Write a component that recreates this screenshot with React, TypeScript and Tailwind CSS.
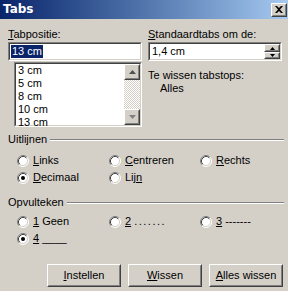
import type { ReactNode } from "react";

const Radio = ({ checked = false }: { checked?: boolean }) => (
  <svg width="12" height="12" viewBox="0 0 12 12" className="shrink-0">
    <circle cx="6" cy="6" r="5" fill="#ffffff" />
    <path d="M2.11 9.89 A5.5 5.5 0 0 1 9.89 2.11" fill="none" stroke="#808080" strokeWidth="1" />
    <path d="M9.89 2.11 A5.5 5.5 0 0 1 2.11 9.89" fill="none" stroke="#ffffff" strokeWidth="1" />
    <path d="M2.82 9.18 A4.5 4.5 0 0 1 9.18 2.82" fill="none" stroke="#404040" strokeWidth="1" />
    <path d="M9.18 2.82 A4.5 4.5 0 0 1 2.82 9.18" fill="none" stroke="#d4d0c8" strokeWidth="1" />
    {checked && <circle cx="6" cy="6" r="2" fill="#000000" />}
  </svg>
);

const Arrow = ({ up, color = "#000000" }: { up?: boolean; color?: string }) => (
  <svg width="7" height="4" viewBox="0 0 7 4">
    <path d={up ? "M3.5 0 L7 4 L0 4 Z" : "M0 0 L7 0 L3.5 4 Z"} fill={color} />
  </svg>
);

const Raised = ({ className, children }: { className: string; children?: ReactNode }) => (
  <div className={`border border-t-white border-l-white border-b-[#404040] border-r-[#404040] ${className}`}>
    <div className="h-full w-full border border-t-[#d4d0c8] border-l-[#d4d0c8] border-b-[#808080] border-r-[#808080] flex items-center justify-center">
      {children}
    </div>
  </div>
);

const Sunken = ({ className, children }: { className: string; children?: ReactNode }) => (
  <div className={`border border-t-[#808080] border-l-[#808080] border-b-white border-r-white ${className}`}>
    <div className="h-full w-full border border-t-[#404040] border-l-[#404040] border-b-[#d4d0c8] border-r-[#d4d0c8] bg-white flex">
      {children}
    </div>
  </div>
);

const Group = ({ label }: { label: string }) => (
  <div className="flex items-center h-[13px]">
    <span>{label}</span>
    <div className="flex-1 ml-[3px] border-t border-t-[#808080] border-b border-b-white" />
  </div>
);

const Option = ({ children, checked, w }: { children: ReactNode; checked?: boolean; w: string }) => (
  <div className={`flex items-center gap-[4px] ${w}`}>
    <Radio checked={checked} />
    <span>{children}</span>
  </div>
);

const U = ({ children }: { children: ReactNode }) => <span className="underline underline-offset-1">{children}</span>;

const listItems = ["3 cm", "5 cm", "8 cm", "10 cm", "13 cm"];

export default function App() {
  return (
    <div className="w-[288px] h-[291px] bg-[#d4d0c8] text-black text-[11px] leading-[13px] font-['Liberation_Sans',Arial,sans-serif] overflow-hidden">
      {/* Title bar */}
      <div className="h-[19px] bg-linear-to-r from-[#0a246a] to-[#a6caf0] flex items-center justify-between pl-[3px] pr-[1px]">
        <span className="text-white font-bold font-['DejaVu_Sans',sans-serif] text-[12px]">Tabs</span>
        <Raised className="w-[16px] h-[14px] bg-[#d4d0c8]">
          <svg width="8" height="7" viewBox="0 0 8 7">
            <path d="M0 0 L2 0 L4 2 L6 0 L8 0 L5 3.5 L8 7 L6 7 L4 5 L2 7 L0 7 L3 3.5 Z" fill="#000000" />
          </svg>
        </Raised>
      </div>

      <div className="pl-[8px] pr-[4px] pt-[9px]">
        {/* Top section */}
        <div className="flex gap-[6px]">
          <div className="w-[134px] flex flex-col">
            <span><U>T</U>abpositie:</span>
            <Sunken className="mt-[1px] h-[19px]">
              <div className="flex items-center pl-[1px]">
                <span className="bg-[#0a246a] text-white px-[1px]">13 cm</span>
              </div>
            </Sunken>
            <Sunken className="ml-[6px] mt-[1px] h-[65px]">
              <div className="flex-1 flex flex-col pl-[2px]">
                {listItems.map((item) => (
                  <span key={item} className="h-[13px]">{item}</span>
                ))}
              </div>
              <div className="w-[16px] flex flex-col bg-[repeating-conic-gradient(#ffffff_0%_25%,#d4d0c8_0%_50%)] bg-[length:2px_2px]">
                <Raised className="h-[16px] bg-[#d4d0c8]">
                  <Arrow up color="#505050" />
                </Raised>
                <div className="flex-1" />
                <Raised className="h-[16px] bg-[#d4d0c8]">
                  <Arrow color="#808080" />
                </Raised>
              </div>
            </Sunken>
          </div>

          <div className="w-[134px] flex flex-col">
            <span><U>S</U>tandaardtabs om de:</span>
            <Sunken className="mt-[1px] h-[19px]">
              <div className="flex-1 flex items-center pl-[2px]">1,4 cm</div>
              <div className="w-[16px] flex flex-col">
                <Raised className="h-[8px] bg-[#d4d0c8]">
                  <svg width="5" height="3" viewBox="0 0 5 3"><path d="M2.5 0 L5 3 L0 3 Z" fill="#000" /></svg>
                </Raised>
                <Raised className="h-[7px] bg-[#d4d0c8]">
                  <svg width="5" height="3" viewBox="0 0 5 3"><path d="M0 0 L5 0 L2.5 3 Z" fill="#000" /></svg>
                </Raised>
              </div>
            </Sunken>
            <span className="mt-[8px]">Te wissen tabstops:</span>
            <span className="pl-[12px]">Alles</span>
          </div>
        </div>

        {/* Uitlijnen */}
        <div className="mt-[6px]">
          <Group label="Uitlijnen" />
          <div className="mt-[6px] pl-[9px]">
            <div className="flex h-[17px] items-center">
              <Option w="w-[92px]"><U>L</U>inks</Option>
              <Option w="w-[91px]"><U>C</U>entreren</Option>
              <Option w="w-[80px]"><U>R</U>echts</Option>
            </div>
            <div className="flex h-[17px] items-center">
              <Option w="w-[92px]" checked><U>D</U>ecimaal</Option>
              <Option w="w-[91px]">Lij<U>n</U></Option>
            </div>
          </div>
        </div>

        {/* Opvulteken */}
        <div className="mt-[10px]">
          <Group label="Opvulteken" />
          <div className="mt-[4px] pl-[9px]">
            <div className="flex h-[17px] items-center">
              <Option w="w-[92px]"><U>1</U> Geen</Option>
              <Option w="w-[91px]"><U>2</U> <span className="tracking-[1.5px]">.......</span></Option>
              <Option w="w-[80px]"><U>3</U> -------</Option>
            </div>
            <div className="flex h-[17px] items-center">
              <Option w="w-[92px]" checked><U>4</U> ____</Option>
            </div>
          </div>
        </div>

        {/* Buttons */}
        <div className="mt-[17px] pl-[39px] flex gap-[7px]">
          <Raised className="w-[74px] h-[23px]"><U>I</U>nstellen</Raised>
          <Raised className="w-[74px] h-[23px]"><U>W</U>issen</Raised>
          <Raised className="w-[74px] h-[23px]"><U>A</U>lles wissen</Raised>
        </div>
      </div>
    </div>
  );
}
